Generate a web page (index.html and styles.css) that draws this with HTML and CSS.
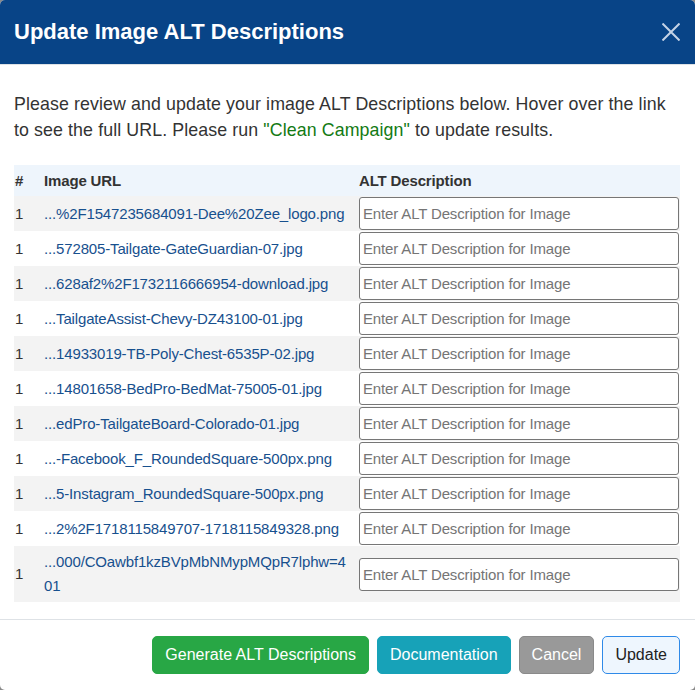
FILE: index.html
```html
<!DOCTYPE html>
<html lang="en">
<head>
<meta charset="utf-8">
<title>Update Image ALT Descriptions</title>
<link rel="stylesheet" href="styles.css">
</head>
<body>
<div class="modal">
  <div class="modal-header">
    <h2 class="modal-title">Update Image ALT Descriptions</h2>
    <button class="close" aria-label="Close">
      <svg width="18" height="18" viewBox="0 0 18 18"><path d="M0.5 0.5L17.5 17.5M17.5 0.5L0.5 17.5" stroke="currentColor" stroke-width="2" fill="none"/></svg>
    </button>
  </div>
  <div class="modal-body">
    <p class="intro">Please review and update your image ALT Descriptions below. Hover over the link to see the full URL. Please run <span class="green">"Clean Campaign"</span> to update results.</p>
    <table class="alt-table">
      <colgroup><col class="col-num"><col class="col-url"><col class="col-alt"></colgroup>
      <thead>
        <tr><th>#</th><th>Image URL</th><th>ALT Description</th></tr>
      </thead>
      <tbody>
        <tr><td>1</td><td><a href="#">...%2F1547235684091-Dee%20Zee_logo.png</a></td><td><input type="text" placeholder="Enter ALT Description for Image"></td></tr>
        <tr><td>1</td><td><a href="#">...572805-Tailgate-GateGuardian-07.jpg</a></td><td><input type="text" placeholder="Enter ALT Description for Image"></td></tr>
        <tr><td>1</td><td><a href="#">...628af2%2F1732116666954-download.jpg</a></td><td><input type="text" placeholder="Enter ALT Description for Image"></td></tr>
        <tr><td>1</td><td><a href="#">...TailgateAssist-Chevy-DZ43100-01.jpg</a></td><td><input type="text" placeholder="Enter ALT Description for Image"></td></tr>
        <tr><td>1</td><td><a href="#">...14933019-TB-Poly-Chest-6535P-02.jpg</a></td><td><input type="text" placeholder="Enter ALT Description for Image"></td></tr>
        <tr><td>1</td><td><a href="#">...14801658-BedPro-BedMat-75005-01.jpg</a></td><td><input type="text" placeholder="Enter ALT Description for Image"></td></tr>
        <tr><td>1</td><td><a href="#">...edPro-TailgateBoard-Colorado-01.jpg</a></td><td><input type="text" placeholder="Enter ALT Description for Image"></td></tr>
        <tr><td>1</td><td><a href="#">...-Facebook_F_RoundedSquare-500px.png</a></td><td><input type="text" placeholder="Enter ALT Description for Image"></td></tr>
        <tr><td>1</td><td><a href="#">...5-Instagram_RoundedSquare-500px.png</a></td><td><input type="text" placeholder="Enter ALT Description for Image"></td></tr>
        <tr><td>1</td><td><a href="#">...2%2F1718115849707-1718115849328.png</a></td><td><input type="text" placeholder="Enter ALT Description for Image"></td></tr>
        <tr><td>1</td><td><a href="#">...000/COawbf1kzBVpMbNMypMQpR7lphw=401</a></td><td><input type="text" placeholder="Enter ALT Description for Image"></td></tr>
      </tbody>
    </table>
  </div>
  <div class="modal-footer">
    <button class="btn btn-green">Generate ALT Descriptions</button>
    <button class="btn btn-teal">Documentation</button>
    <button class="btn btn-grey">Cancel</button>
    <button class="btn btn-light">Update</button>
  </div>
</div>
</body>
</html>
```
FILE: styles.css
```css
html, body {
  margin: 0;
  padding: 0;
  background: #8a8a8a;
}
body {
  font-family: "Liberation Sans", Arial, sans-serif;
  color: #333;
}
.modal {
  width: 695px;
  height: 690px;
  background: #fff;
  border-radius: 5px;
  overflow: hidden;
  display: flex;
  flex-direction: column;
}
.modal-header {
  background: #084487;
  height: 65px;
  border-bottom: 1px solid #dee2e6;
  display: flex;
  align-items: center;
  justify-content: space-between;
  padding: 0 15px 0 14px;
  box-sizing: border-box;
  flex: none;
}
.modal-title {
  margin: 0;
  font-size: 22px;
  font-weight: bold;
  color: #fff;
}
.close {
  background: none;
  border: 0;
  padding: 0;
  color: #c4d3e6;
  width: 18px;
  height: 18px;
  display: flex;
}
.modal-body {
  padding: 26px 15px 0 14px;
  flex: 1;
}
.intro {
  margin: 0 0 22px 0;
  font-size: 17.8px;
  letter-spacing: 0.1px;
  line-height: 26px;
}
.green {
  color: #137a13;
}
.alt-table {
  width: 666px;
  table-layout: fixed;
  border-collapse: collapse;
  font-size: 15px;
  letter-spacing: -0.15px;
}
.col-num { width: 30px; }
.col-url { width: 315px; }
.col-alt { width: 321px; }
.alt-table thead tr {
  background: #eef5fc;
}
.alt-table th {
  text-align: left;
  font-weight: bold;
  height: 31px;
  padding: 0;
  vertical-align: middle;
}
.alt-table th:first-child,
.alt-table td:first-child {
  padding-left: 1px;
}
.alt-table td {
  padding: 1px 0;
  vertical-align: middle;
  line-height: 24px;
}
.alt-table td:nth-child(2) {
  padding: 4px 8px 4px 0;
  word-break: break-all;
}
.alt-table tbody tr:nth-child(odd) {
  background: #f3f3f3;
}
.alt-table a {
  color: #17508e;
  text-decoration: none;
}
.alt-table input {
  width: 320px;
  height: 33px;
  box-sizing: border-box;
  border: 1px solid #767676;
  border-radius: 3px;
  padding: 0 3px;
  font-family: "Liberation Sans", Arial, sans-serif;
  font-size: 15px;
  letter-spacing: -0.15px;
  background: #fff;
  display: block;
}
.alt-table input::placeholder {
  color: #757575;
}
.modal-footer {
  border-top: 1px solid #dee2e6;
  height: 71px;
  flex: none;
  display: flex;
  justify-content: flex-end;
  align-items: flex-start;
  gap: 8px;
  padding: 16px 15px 0 0;
  box-sizing: border-box;
}
.btn {
  font-family: "Liberation Sans", Arial, sans-serif;
  font-size: 16px;
  height: 38px;
  padding: 0 12px;
  border-radius: 5px;
  border: 1px solid transparent;
  color: #fff;
}
.btn-green { background: #28a745; border-color: #28a745; }
.btn-teal { background: #17a2b8; border-color: #17a2b8; }
.btn-grey { background: #999; border-color: #8a8a8a; }
.btn-light { background: #eef6fe; border-color: #2f8ae8; color: #222; }
```
